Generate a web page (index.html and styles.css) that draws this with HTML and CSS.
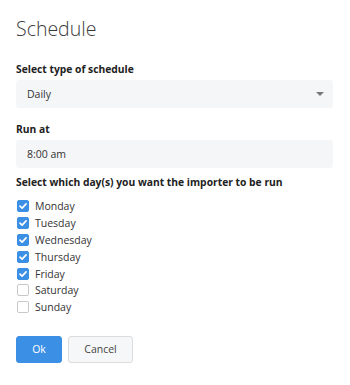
FILE: index.html
```html
<!DOCTYPE html>
<html>
<head>
<meta charset="utf-8">
<link rel="stylesheet" href="styles.css">
</head>
<body>
<div class="dialog">
  <h1 class="title">Schedule</h1>

  <div class="group group-type">
    <div class="label">Select type of schedule</div>
    <div class="field select">
      <span>Daily</span>
      <span class="caret"></span>
    </div>
  </div>

  <div class="group group-run">
    <div class="label">Run at</div>
    <div class="field">8:00 am</div>
  </div>

  <div class="group group-days">
    <div class="label">Select which day(s) you want the importer to be run</div>
    <ul class="days">
      <li class="day"><span class="box checked"><svg viewBox="0 0 12 12" width="12" height="12"><path d="M3 6.2 L5.1 8.2 L9.1 3.9" fill="none" stroke="#fff" stroke-width="1.7" stroke-linecap="round" stroke-linejoin="round"/></svg></span>Monday</li>
      <li class="day"><span class="box checked"><svg viewBox="0 0 12 12" width="12" height="12"><path d="M3 6.2 L5.1 8.2 L9.1 3.9" fill="none" stroke="#fff" stroke-width="1.7" stroke-linecap="round" stroke-linejoin="round"/></svg></span>Tuesday</li>
      <li class="day"><span class="box checked"><svg viewBox="0 0 12 12" width="12" height="12"><path d="M3 6.2 L5.1 8.2 L9.1 3.9" fill="none" stroke="#fff" stroke-width="1.7" stroke-linecap="round" stroke-linejoin="round"/></svg></span>Wednesday</li>
      <li class="day"><span class="box checked"><svg viewBox="0 0 12 12" width="12" height="12"><path d="M3 6.2 L5.1 8.2 L9.1 3.9" fill="none" stroke="#fff" stroke-width="1.7" stroke-linecap="round" stroke-linejoin="round"/></svg></span>Thursday</li>
      <li class="day"><span class="box checked"><svg viewBox="0 0 12 12" width="12" height="12"><path d="M3 6.2 L5.1 8.2 L9.1 3.9" fill="none" stroke="#fff" stroke-width="1.7" stroke-linecap="round" stroke-linejoin="round"/></svg></span>Friday</li>
      <li class="day"><span class="box"></span>Saturday</li>
      <li class="day"><span class="box"></span>Sunday</li>
    </ul>
  </div>

  <div class="actions">
    <button class="btn btn-primary">Ok</button>
    <button class="btn btn-default">Cancel</button>
  </div>
</div>
</body>
</html>
```

FILE: styles.css
```css
html, body {
  margin: 0;
  padding: 0;
  background: #ffffff;
}

body {
  font-family: "Open Sans", "DejaVu Sans", sans-serif;
  color: #333333;
  font-size: 10.5px;
}

.dialog {
  width: 317px;
  padding: 14px 16px 0 16px;
}

.title {
  margin: 0;
  font-size: 19.5px;
  line-height: 30px;
  font-weight: 300;
  color: #3a3a3a;
}

.group {
  display: flex;
  flex-direction: column;
}

.group-type {
  margin-top: 17px;
}

.group-run {
  margin-top: 13px;
}

.group-days {
  margin-top: 6px;
}

.label {
  font-weight: 700;
  font-size: 10.3px;
  line-height: 16px;
  color: #222;
  margin-bottom: 3px;
}

.field {
  height: 28px;
  box-sizing: border-box;
  background: #f5f6f7;
  border-radius: 3px;
  padding: 0 11px;
  display: flex;
  align-items: center;
  font-size: 10.5px;
  color: #333;
}

.select {
  justify-content: space-between;
}

.caret {
  width: 0;
  height: 0;
  border-left: 4px solid transparent;
  border-right: 4px solid transparent;
  border-top: 4px solid #777;
  margin-right: -2px;
}

.days {
  list-style: none;
  margin: 5px 0 0 0;
  padding: 0;
  display: flex;
  flex-direction: column;
}

.day {
  display: flex;
  align-items: center;
  height: 16.8px;
  font-size: 10.5px;
  color: #333;
}

.box {
  width: 12px;
  height: 12px;
  box-sizing: border-box;
  border: 1px solid #c8c8c8;
  border-radius: 2px;
  margin: 0 6px 0 1px;
  background: #fff;
  position: relative;
  flex: none;
}

.box.checked {
  background: #3b8fe5;
  border-color: #3b8fe5;
}

.box svg {
  position: absolute;
  left: -1px;
  top: -1px;
}

.actions {
  display: flex;
  gap: 6px;
  margin-top: 20px;
}

.btn {
  height: 27px;
  box-sizing: border-box;
  font-family: "Open Sans", "DejaVu Sans", sans-serif;
  font-size: 10.5px;
  border-radius: 3px;
  padding: 0;
  cursor: pointer;
}

.btn-primary {
  width: 46px;
  background: #3b8fe5;
  border: 1px solid #3b8fe5;
  color: #fff;
}

.btn-default {
  width: 65px;
  background: #f6f7f8;
  border: 1px solid #dcdcdc;
  color: #444;
}
```
